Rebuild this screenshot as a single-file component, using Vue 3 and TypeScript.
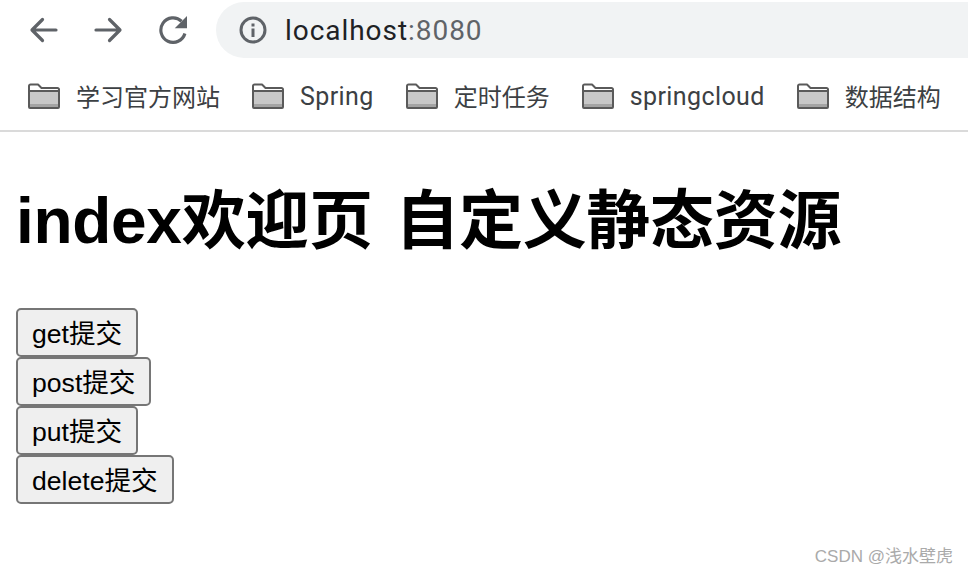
<script setup lang="ts">
const bookmarks = [
  { label: "学习官方网站", latin: false },
  { label: "Spring", latin: true },
  { label: "定时任务", latin: false },
  { label: "springcloud", latin: true },
  { label: "数据结构", latin: false },
];
const buttons = ["get提交", "post提交", "put提交", "delete提交"];
</script>

<template>
  <div class="page">
    <header class="chrome">
      <div class="toolbar">
        <div class="nav">
          <svg class="nav-icon" width="30" height="28" viewBox="0 0 30 28">
            <path d="M27 14H3.500M13.500 3.500 3 14 13.500 24.500" />
          </svg>
          <svg class="nav-icon" width="30" height="28" viewBox="0 0 30 28">
            <path d="M3 14H26.500M16.500 3.500 27 14 16.500 24.500" />
          </svg>
          <svg class="reload" width="28" height="28" viewBox="4 4 16 16">
            <path class="arc" d="M16.900 7A7 7 0 1 0 18.800 14" />
            <path class="head" d="M20 4v7h-7z" />
          </svg>
        </div>
        <div class="omnibox">
          <svg class="info" width="28" height="28" viewBox="0 0 28 28">
            <circle cx="14" cy="14" r="12" />
            <rect class="solid" x="12.500" y="7.500" width="3" height="3" />
            <rect class="solid" x="12.500" y="12.500" width="3" height="8.500" />
          </svg>
          <span class="url">localhost<span class="port">:8080</span></span>
        </div>
      </div>
      <nav class="bookmarks">
        <a v-for="b in bookmarks" :key="b.label" class="bookmark">
          <svg class="folder" width="32" height="26" viewBox="0 0 32 26">
            <path class="folder-fill" d="M1 8h30v16H1z" />
            <path class="folder-band" d="M1 21h30v3H1z" />
            <path class="folder-line" d="M1 24V3a1.500 1.500 0 0 1 1.500-1.500H10L13.500 5H29.500A1.500 1.500 0 0 1 31 6.500V24a1 1 0 0 1-1 1H2a1 1 0 0 1-1-1zM1 8h30" />
          </svg>
          <span class="label" :class="{ latin: b.latin }">{{ b.label }}</span>
        </a>
      </nav>
    </header>
    <main class="content">
      <h1>index欢迎页 自定义静态资源</h1>
      <div class="actions">
        <div v-for="b in buttons" :key="b" class="row"><button type="button">{{ b }}</button></div>
      </div>
    </main>
    <div class="watermark">CSDN @浅水壁虎</div>
  </div>
</template>

<style scoped>
.page {
  position: relative;
  width: 968px;
  height: 574px;
  overflow: hidden;
  background: #fff;
  font-family: "Liberation Sans", "Noto Sans CJK SC", sans-serif;
}
.chrome {
  height: 132px;
  box-sizing: border-box;
  border-bottom: 2px solid #dadada;
}
.toolbar {
  display: flex;
  align-items: center;
  height: 60px;
}
.nav {
  display: flex;
  align-items: center;
  gap: 34px;
  width: 216px;
  padding-left: 29px;
  box-sizing: border-box;
}
.nav-icon path {
  fill: none;
  stroke: #5f6368;
  stroke-width: 3.200;
  stroke-linecap: round;
  stroke-linejoin: round;
}
.reload {
  margin-left: 2px;
}
.reload .arc {
  fill: none;
  stroke: #5f6368;
  stroke-width: 1.800;
}
.reload .head {
  fill: #5f6368;
}
.omnibox {
  flex: 1;
  display: flex;
  align-items: center;
  height: 56px;
  padding-left: 23px;
  background: #f1f3f4;
  border-radius: 28px 0 0 28px;
}
.info circle {
  fill: none;
  stroke: #5f6368;
  stroke-width: 3;
}
.info .solid {
  fill: #5f6368;
}
.url {
  margin-left: 18px;
  font-family: Roboto, sans-serif;
  font-size: 28px;
  letter-spacing: 0.95px;
  color: #202124;
}
.port {
  color: #5f6368;
}
.bookmarks {
  display: flex;
  align-items: center;
  height: 70px;
  padding-left: 28px;
  padding-top: 2px;
  box-sizing: border-box;
  gap: 32px;
}
.bookmark {
  display: flex;
  align-items: center;
  gap: 16px;
  color: #3c4043;
}
.label {
  font-family: "Noto Sans CJK SC", sans-serif;
  font-size: 24px;
  line-height: 30px;
}
.label.latin {
  font-family: Roboto, sans-serif;
  font-size: 25px;
  letter-spacing: 0.4px;
  padding-top: 2px;
}
.folder-fill {
  fill: #c8c8c8;
}
.folder-band {
  fill: #a4a4a4;
}
.folder-line {
  fill: none;
  stroke: #5a5a5a;
  stroke-width: 2;
  stroke-linejoin: round;
}
.content {
  padding: 0 16px;
}
h1 {
  margin: 49px 0 47px;
  font-size: 64px;
  font-weight: 700;
  line-height: 80px;
  letter-spacing: -0.3px;
  word-spacing: 5px;
  color: #000;
  white-space: nowrap;
}
.row {
  height: 49px;
}
button {
  height: 49px;
  box-sizing: border-box;
  padding: 0 14px 3px;
  font-family: inherit;
  font-size: 26.600px;
  color: #000;
  background: #efefef;
  border: 2px solid #767676;
  border-radius: 5px;
}
.watermark {
  position: absolute;
  right: 15px;
  bottom: 7px;
  font-size: 17px;
  color: #aaa;
}
</style>

<style>
html,
body {
  margin: 0;
  background: #fff;
}
</style>
